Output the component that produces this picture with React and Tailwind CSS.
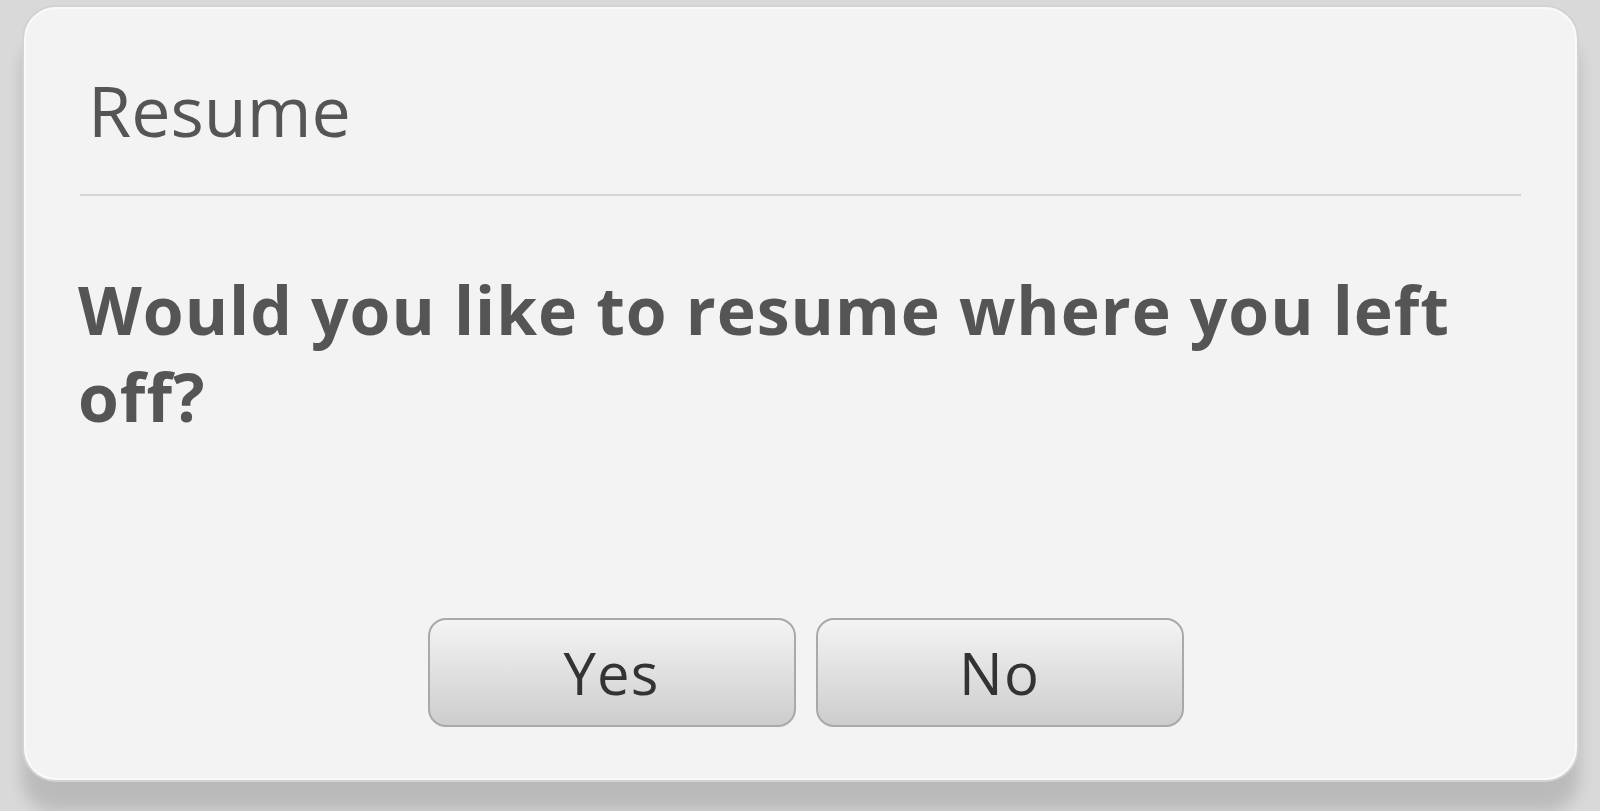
export default function App() {
  return (
    <div
      className="h-[811px] w-[1600px] overflow-hidden bg-[#d9d9d9] pl-[22px] pt-[5px]"
      style={{ fontFamily: '"Open Sans", "Noto Sans", sans-serif' }}
    >
      <div className="flex h-[777px] w-[1557px] flex-col rounded-[34px] border-2 border-[#d2d2d2] bg-[#f3f3f3] shadow-[0_30px_16px_rgba(0,0,0,0.14),inset_0_0_0_2px_#fafafa]">
        <h1 className="mt-[68px] pl-[64px] text-[70px] font-normal leading-[1] text-[#555555]">
          Resume
        </h1>
        <div className="mx-[56px] mt-[49px] h-[2px] bg-[#d4d4d4]" />
        <p className="mt-[70px] pl-[54px] pr-[56px] text-[66px] font-bold leading-[87px] tracking-[0.015em] text-[#555555]">
          Would you like to resume where you left off?
        </p>
        <div className="mt-auto mb-[53px] flex justify-center gap-[20px] pl-[10px]">
          <DialogButton label="Yes" />
          <DialogButton label="No" />
        </div>
      </div>
    </div>
  );
}

function DialogButton({ label }) {
  return (
    <button className="flex h-[109px] w-[368px] items-center justify-center rounded-[18px] border-2 border-[#a9a9a9] bg-gradient-to-b from-[#f4f4f4] to-[#cdcdcd] text-[58px] leading-none tracking-[0.02em] text-[#333333]">
      {label}
    </button>
  );
}
